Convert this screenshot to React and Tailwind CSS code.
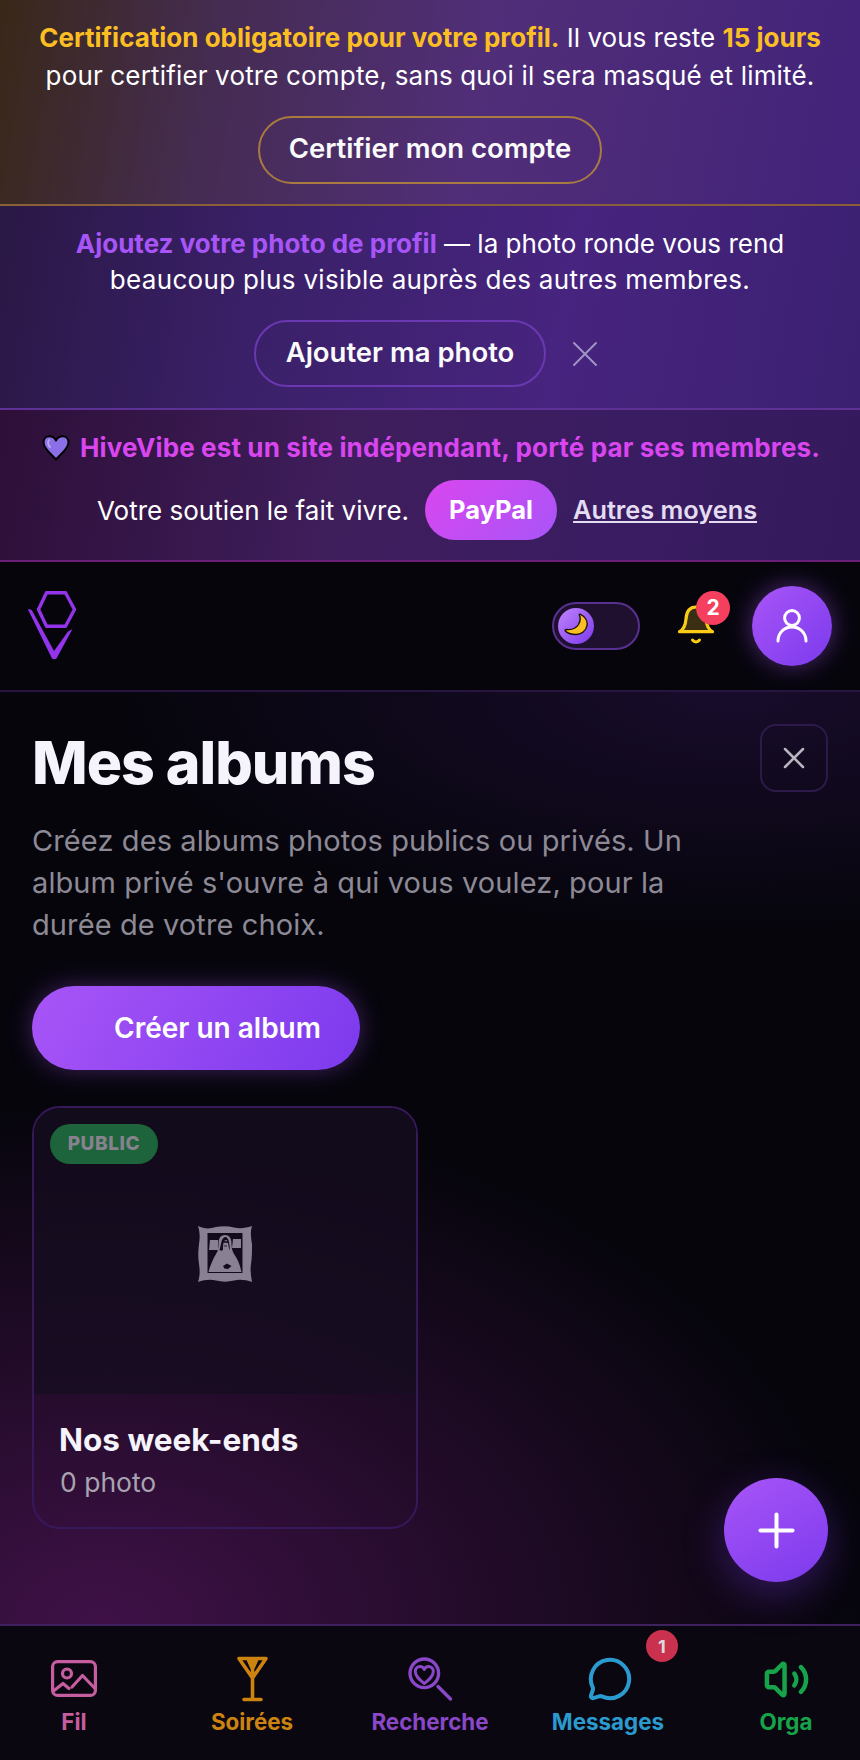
import React from "react";
import { MessageCircle, Volume2, Plus, X } from "lucide-react";

function Logo() {
  return (
    <svg width="50" height="72" viewBox="0 0 50 72" fill="none" className="block">
      <path d="M19.5 2.7H38.5L47.5 19.5L38.5 36.3H19.5L11.5 19.5Z" stroke="#9333ea" strokeWidth="3.4" strokeLinejoin="round" />
      <path d="M1 19.5C2.5 19 4 19.5 5 20.5L27 61L41 41.5C43 40.5 44.5 39.5 45.5 39L29.5 68.5C28.5 69.5 26 69.5 25 68.5Z" fill="#9333ea" />
    </svg>
  );
}

function Heart() {
  return (
    <svg width="28" height="26" viewBox="0 0 28 26" className="block shrink-0">
      <path d="M14 24.5C9 19 1.5 13.5 1.5 7.5C1.5 3.5 4.3 1.2 7.5 1.2C10.5 1.2 12.8 3 14 5.5C15.2 3 17.5 1.2 20.5 1.2C23.7 1.2 26.5 3.5 26.5 7.5C26.5 13.5 19 19 14 24.5Z" fill="#8b6fe6" stroke="#000" strokeWidth="2" strokeLinejoin="round" />
      <path d="M7 5C5.5 7 6 10 8 12" stroke="#b7a6f3" strokeWidth="2" fill="none" strokeLinecap="round" />
    </svg>
  );
}

function Moon() {
  return (
    <svg width="24" height="24" viewBox="0 0 24 24" className="block">
      <path d="M16 1.2C21 3.5 23.8 8 23 12.5C22 18 17.5 21.5 12 21.5C7.5 21.5 3 20 1.2 17.8C1 17 1.5 16.5 2.5 16.5C7 17 12 15.5 14.5 11.5C16.5 8 16.5 4.5 15.3 2C15.2 1.4 15.5 1 16 1.2Z" fill="#fbbf24" stroke="#1a1205" strokeWidth="1.4" strokeLinejoin="round" />
    </svg>
  );
}

function BellIcon() {
  return (
    <svg width="38" height="40" viewBox="0 0 38 40" fill="none" stroke="#facc15" strokeLinecap="round" strokeLinejoin="round" className="block">
      <path d="M2.5 26.7C6 25 8.5 20 9 14C9.5 6 13 2 19 2C25 2 28.5 6 29 14C29.5 20 32 25 35.5 26.7Z" fill="#3a2f12" strokeWidth="3.2" />
      <path d="M15.5 35C17.5 37.5 20.5 37.5 22.5 35" strokeWidth="3" />
    </svg>
  );
}

function UserIcon() {
  return (
    <svg width="32" height="34" viewBox="0 0 32 34" fill="none" stroke="#fff" strokeWidth="3" strokeLinecap="round" className="block">
      <circle cx="16" cy="9" r="7.4" />
      <path d="M2 32C2 24 8 18 16 18C24 18 30 24 30 32" />
    </svg>
  );
}

function FramedPicture() {
  const g = "#8a8094";
  const d = "#120b1c";
  return (
    <svg width="54" height="56" viewBox="0 0 54 56" className="block">
      <path d="M0 0C6 3 12 3 18 1C24 0 30 0 36 1.5C42 3 48 2 54 0C52 6 53 12 54 18C54 26 54 32 53 38C52 44 53 50 54 56C48 54 42 53 36 54.5C30 56 24 56 18 54.5C12 53 6 54 0 56C2 50 2 44 1 38C0 32 0 26 1 18C2 12 2 6 0 0Z" fill={g} />
      <rect x="9.5" y="7" width="35" height="40" fill={d} />
      <path d="M12 14H20V24H11ZM35 13H43V22H34Z" fill={g} />
      <path d="M27 9C22 9 20.5 13 20.5 18C20.5 22 20 25 18 28C15 33 12 40 10.5 46H43.5C42 38 39 32 36 28C34 25 33.5 21 33.5 17C33.5 12 31 9 27 9Z" fill={g} />
      <path d="M21.5 24C23 20 23 12 27 11C31 11 31.5 18 32 24C30 22 31 16 28.5 14C25 13.5 25 20 25 23C25 25 23 25 21.5 24Z" fill={d} />
      <path d="M24.5 15H30V17H24.5ZM26 19.5H29V20.5H26Z" fill={d} opacity=".8" />
      <path d="M25 40L29 37.5L33.5 40L30 43L26.5 42.5Z" fill={d} />
    </svg>
  );
}

function ImageIcon() {
  return (
    <svg width="46" height="38" viewBox="0 0 46 38" fill="none" stroke="#c65d9e" strokeWidth="3.2" strokeLinecap="round" strokeLinejoin="round" className="block">
      <rect x="1.6" y="1.6" width="42.8" height="33.8" rx="5" />
      <circle cx="16" cy="13.5" r="4.5" />
      <path d="M2.5 31L12 23.5L18 28.5M21 27L31.5 15.5L43.5 28" />
    </svg>
  );
}

function GlassIcon() {
  return (
    <svg width="31" height="46" viewBox="0 0 31 46" fill="none" stroke="#cc8310" strokeWidth="3.6" strokeLinecap="round" strokeLinejoin="round" className="block">
      <path d="M2 2.5H29L15.5 22ZM15.5 3V43M7 43.5H24M11 3L15.5 13M20 3L15.5 13" />
    </svg>
  );
}

function SearchHeartIcon() {
  return (
    <svg width="46" height="46" viewBox="0 0 46 46" fill="none" stroke="#8a47c8" strokeWidth="3.4" strokeLinecap="round" strokeLinejoin="round" className="block">
      <circle cx="17.3" cy="17.3" r="14.3" />
      <path d="M17.3 27.5C13 24 8.3 20.5 8.3 15.5C8.3 12.5 10.5 10.5 13 10.5C15 10.5 16.6 11.7 17.3 13.5C18 11.7 19.6 10.5 21.6 10.5C24.1 10.5 26.3 12.5 26.3 15.5C26.3 20.5 21.6 24 17.3 27.5Z" strokeWidth="3" />
      <path d="M31 30.5L43.5 43" />
    </svg>
  );
}

function NavItem({ icon, label, color, badge }) {
  return (
    <div className="relative w-[120px] flex flex-col items-center">
      <div className="h-[50px] flex items-center justify-center">{icon}</div>
      <span className={`mt-[6px] text-[22.4px] leading-[24px] font-bold ${color}`}>{label}</span>
      {badge}
    </div>
  );
}

export default function App() {
  return (
    <div className="w-[860px] h-[1760px] flex flex-col overflow-hidden bg-[#06050c] font-['Inter',sans-serif] text-white">
      {/* banner 1 */}
      <section className="h-[206px] shrink-0 flex flex-col items-center pt-[19px] border-b-2 border-[#8a6038] bg-[linear-gradient(100deg,#392818_0%,#452c52_25%,#512e78_55%,#42237a_100%)]">
        <p className="text-center text-[26px] leading-[38px] whitespace-nowrap">
          <strong className="font-bold text-[#fbbf24]">Certification obligatoire pour votre profil.</strong> Il vous reste <strong className="font-bold text-[#fbbf24]">15 jours</strong>
          <br /><span className="tracking-[0.16px]">pour certifier votre compte, sans quoi il sera masqué et limité.</span>
        </p>
        <button className="mt-[21px] w-[344px] h-[68px] pb-[2px] rounded-full border-2 border-[#a97a42] text-[27.5px] font-semibold text-[#fafafa]">Certifier mon compte</button>
      </section>

      {/* banner 2 */}
      <section className="h-[204px] shrink-0 flex flex-col items-center pt-[20px] border-b-2 border-[#5d3196] bg-[linear-gradient(100deg,#2a1845_0%,#3a2068_30%,#47247f_65%,#3b2071_100%)]">
        <p className="text-center text-[26px] leading-[36px] whitespace-nowrap">
          <strong className="font-bold text-[#a855f7]">Ajoutez votre photo de profil</strong> — la photo ronde vous rend
          <br /><span className="tracking-[0.33px]">beaucoup plus visible auprès des autres membres.</span>
        </p>
        <div className="mt-[22px] flex items-center gap-[17px] ml-[1px]">
          <button className="w-[292px] h-[67px] pb-[2px] rounded-full border-2 border-[#6a38b0] text-[27.5px] font-semibold text-[#fafafa]">Ajouter ma photo</button>
          <X size={44} strokeWidth={1.1} className="text-[#a195c4]" />
        </div>
      </section>

      {/* banner 3 */}
      <section className="h-[152px] shrink-0 flex flex-col items-center pt-[24px] border-b-2 border-[#6b1f78] bg-[linear-gradient(100deg,#2d0f38_0%,#3f1e5c_40%,#3a1c62_70%,#341a5c_100%)]">
        <div className="flex items-center gap-[10px] ml-[2px] h-[28px]">
          <Heart />
          <strong className="text-[26px] leading-[28px] font-bold tracking-[0.13px] text-[#d946ef] whitespace-nowrap">HiveVibe est un site indépendant, porté par ses membres.</strong>
        </div>
        <div className="mt-[18px] flex items-center mr-[6px]">
          <span className="text-[26px] whitespace-nowrap">Votre soutien le fait vivre.</span>
          <span className="ml-[16px] w-[132px] h-[60px] rounded-full flex items-center justify-center text-[25.5px] font-bold bg-[linear-gradient(135deg,#d946ef,#a855f7)]">PayPal</span>
          <span className="ml-[16px] text-[25.3px] font-semibold underline text-[#e4dcf0] whitespace-nowrap">Autres moyens</span>
        </div>
      </section>

      {/* header */}
      <header className="h-[130px] shrink-0 flex items-center pl-[27px] pr-[28px] border-b-2 border-[#27143f] bg-[#06050c]">
        <Logo />
        <div className="ml-auto flex items-center">
          <div className="w-[88px] h-[48px] rounded-full border-2 border-[#583090] bg-[#1f1030] flex items-center pl-[4px]">
            <div className="w-[36px] h-[36px] rounded-full flex items-center justify-center bg-[linear-gradient(135deg,#c084fc,#7c3aed)]"><div className="mt-[-3px]"><Moon /></div></div>
          </div>
          <div className="relative ml-[37px] mt-[-2px] w-[38px] h-[40px]">
            <BellIcon />
            <span className="absolute left-[19px] top-[-14px] w-[34px] h-[34px] rounded-full bg-[#f43f5e] flex items-center justify-center text-[21px] font-bold">2</span>
          </div>
          <div className="ml-[37px] w-[80px] h-[80px] rounded-full flex items-center justify-center bg-[linear-gradient(135deg,#a855f7,#7c3aed)] shadow-[0_0_24px_rgba(168,85,247,0.45)]">
            <UserIcon />
          </div>
        </div>
      </header>

      {/* main */}
      <main className="relative flex-1 pl-[32px] pr-[32px] pt-[32px] bg-[radial-gradient(760px_520px_at_12%_100%,#3f1147_0%,rgba(63,17,71,0)_100%),radial-gradient(620px_240px_at_85%_0%,#180c2b_0%,rgba(24,12,43,0)_100%)]">
        <div className="flex items-start justify-between">
          <div>
            <h1 className="mt-[3px] text-[59px] leading-[72px] font-extrabold tracking-[-1px] text-[#f5f3fb]">Mes albums</h1>
            <p className="mt-[21px] w-[680px] text-[29px] leading-[42px] tracking-[0.1px] text-[#8d8a96]">
              Créez des albums photos publics ou privés. Un<br />album privé s'ouvre à qui vous voulez, pour la<br />durée de votre choix.
            </p>
          </div>
          <button className="w-[68px] h-[68px] rounded-[16px] border-2 border-[#2e1a4a] flex items-center justify-center">
            <X size={36} strokeWidth={1.7} className="text-[#b8b5c0]" />
          </button>
        </div>

        <button className="mt-[40px] w-[328px] h-[84px] rounded-full pl-[82px] text-left text-[28px] font-semibold bg-[linear-gradient(120deg,#a855f7,#7c3aed)] shadow-[0_0_24px_rgba(168,85,247,0.35)]">Créer un album</button>

        <article className="mt-[36px] w-[386px] h-[423px] rounded-[28px] border-2 border-[#36195a] overflow-hidden flex flex-col">
          <div className="relative h-[286px] shrink-0 bg-[rgba(22,14,32,0.75)] flex items-center justify-center">
            <span className="absolute left-[16px] top-[16px] w-[108px] h-[40px] rounded-full bg-[#1d633b] flex items-center justify-center text-[19px] font-extrabold tracking-[0.6px] text-[#87828d]">PUBLIC</span>
            <div className="mt-[6px]"><FramedPicture /></div>
          </div>
          <div className="pl-[25px] pt-[26px]">
            <h2 className="text-[31.5px] leading-[40px] font-bold text-[#f5f3fb]">Nos week-ends</h2>
            <p className="mt-[2px] ml-[1px] text-[26.5px] leading-[40px] text-[#a8a3b0]">0 photo</p>
          </div>
        </article>

        <button className="absolute left-[724px] bottom-[42px] w-[104px] h-[104px] rounded-full flex items-center justify-center bg-[linear-gradient(150deg,#a855f7,#7c3aed)] shadow-[0_12px_40px_rgba(124,58,237,0.35)]">
          <Plus size={55} strokeWidth={1.75} />
        </button>
      </main>

      {/* nav */}
      <nav className="h-[136px] shrink-0 flex items-start justify-between px-[14px] pt-[28px] border-t-2 border-[#3f2160] bg-[#0a0710]">
        <NavItem icon={<ImageIcon />} label="Fil" color="text-[#c65d9e]" />
        <NavItem icon={<GlassIcon />} label="Soirées" color="text-[#cc8310]" />
        <NavItem icon={<SearchHeartIcon />} label="Recherche" color="text-[#8a47c8]" />
        <NavItem
          icon={<MessageCircle size={46} strokeWidth={2.1} className="text-[#2b9bcf] ml-[4px]" />}
          label="Messages"
          color="text-[#2b9bcf]"
          badge={<span className="absolute left-[98px] top-[-24px] w-[32px] h-[32px] rounded-full bg-[#c9314f] flex items-center justify-center text-[18px] font-bold text-[#dcd8dc]">1</span>}
        />
        <NavItem icon={<Volume2 size={47} strokeWidth={2.3} className="text-[#16a34a]" />} label="Orga" color="text-[#16a34a]" />
      </nav>
    </div>
  );
}
